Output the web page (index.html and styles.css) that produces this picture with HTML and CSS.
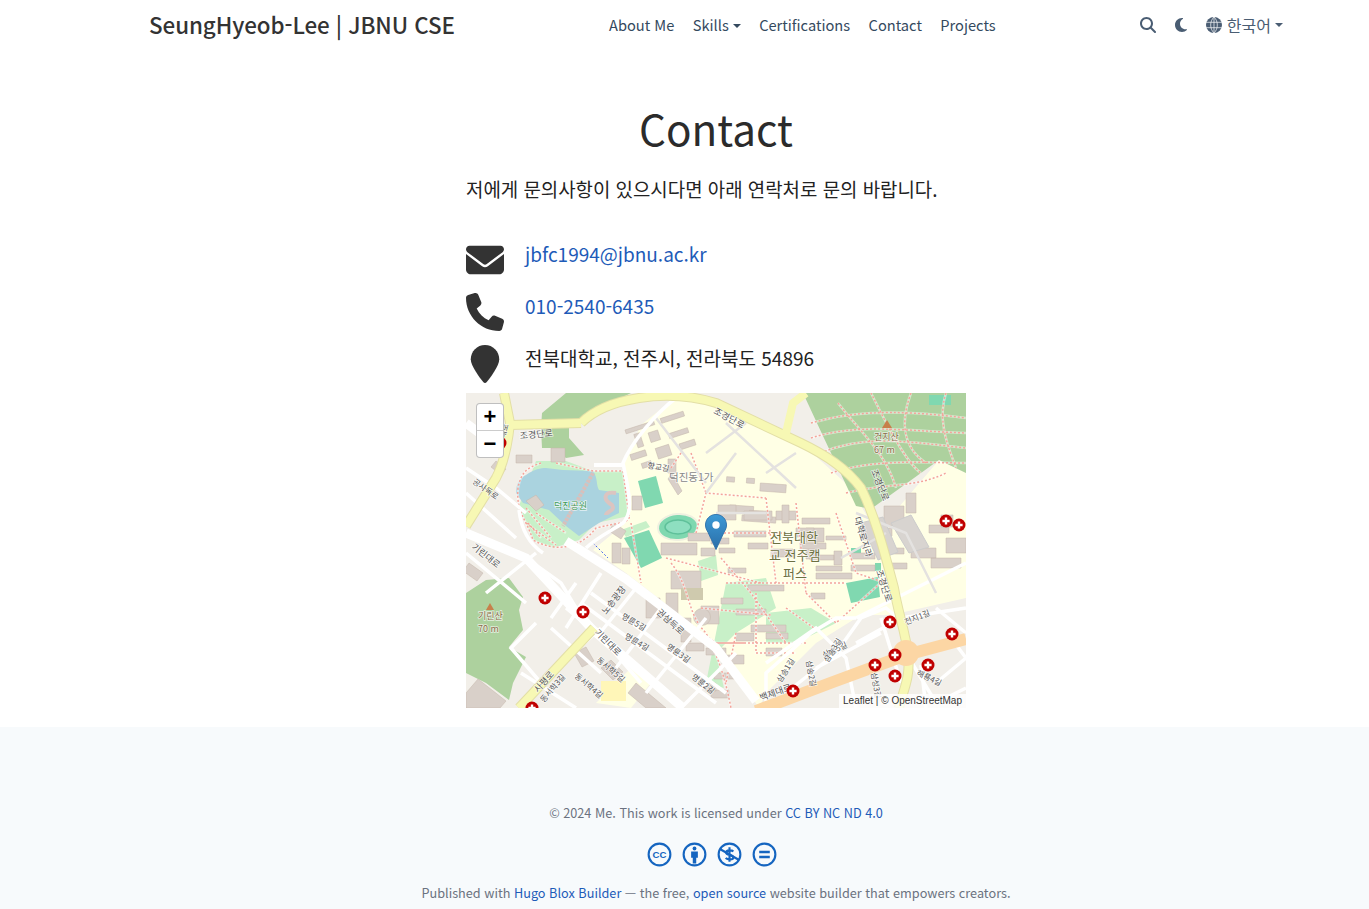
FILE: index.html
```html
<!DOCTYPE html>
<html lang="ko">
<head>
    <meta charset="UTF-8">
    <meta name="viewport" content="width=device-width, initial-scale=1.0">
    <title>Contact | SeungHyeob-Lee</title>
    <link rel="stylesheet" href="styles.css">
</head>
<body>
<div class="page">
    <header class="navbar">
        <a class="brand" href="#">SeungHyeob-Lee | JBNU CSE</a>
        <nav class="nav-links">
            <a href="#">About Me</a>
            <a href="#" class="caret">Skills</a>
            <a href="#">Certifications</a>
            <a href="#">Contact</a>
            <a href="#">Projects</a>
        </nav>
        <div class="nav-tools">
            <svg class="tool-icon" viewBox="0 0 512 512"><path d="M416 208c0 45.900-14.900 88.300-40 122.700L502.600 457.400c12.500 12.500 12.500 32.800 0 45.300s-32.800 12.500-45.300 0L330.700 376c-34.400 25.200-76.800 40-122.700 40C93.100 416 0 322.900 0 208S93.100 0 208 0S416 93.100 416 208zM208 352a144 144 0 1 0 0-288 144 144 0 1 0 0 288z"/></svg>
            <svg class="tool-icon moon" viewBox="0 0 384 512"><path d="M223.500 32C100 32 0 132.300 0 256S100 480 223.500 480c60.600 0 115.500-24.200 155.800-63.400c5-4.900 6.300-12.500 3.100-18.700s-10.100-9.700-17-8.500c-9.800 1.700-19.800 2.600-30.100 2.600c-96.900 0-175.500-78.800-175.500-176c0-65.800 36-123.100 89.300-153.300c6.100-3.500 9.200-10.500 7.700-17.300s-7.300-11.900-14.300-12.500c-6.300-.5-12.600-.8-19-.8z"/></svg>
            <a href="#" class="lang caret">
                <svg class="tool-icon globe" viewBox="0 0 16 16">
                    <circle cx="8" cy="8" r="8"/>
                    <path d="M0 5.300h16M0 10.700h16M8 0v16M8 0C3.600 4 3.600 12 8 16M8 0c4.400 4 4.400 12 0 16" fill="none" stroke="#fff" stroke-width="0.700"/>
                </svg>
                한국어
            </a>
        </div>
    </header>

    <main class="content">
        <h1>Contact</h1>
        <p class="lead">저에게 문의사항이 있으시다면 아래 연락처로 문의 바랍니다.</p>
        <ul class="contact-list">
            <li>
                <span class="contact-icon"><svg viewBox="0 0 512 512"><path d="M48 64C21.500 64 0 85.500 0 112c0 15.100 7.100 29.300 19.200 38.400L236.800 313.600c11.400 8.500 27 8.500 38.400 0L492.800 150.400c12.100-9.100 19.200-23.300 19.200-38.400c0-26.500-21.500-48-48-48H48zM0 176V384c0 35.300 28.700 64 64 64H448c35.300 0 64-28.700 64-64V176L294.400 339.200c-22.800 17.100-54 17.100-76.800 0L0 176z"/></svg></span>
                <a href="#">jbfc1994@jbnu.ac.kr</a>
            </li>
            <li>
                <span class="contact-icon"><svg viewBox="0 0 512 512"><path d="M164.900 24.600c-7.700-18.600-28-28.500-47.400-23.200l-88 24C12.100 30.200 0 46 0 64C0 311.400 200.600 512 448 512c18 0 33.800-12.100 38.600-29.500l24-88c5.300-19.400-4.600-39.700-23.200-47.400l-96-40c-16.300-6.800-35.200-2.100-46.300 11.600L304.700 368C234.300 334.700 177.300 277.700 144 207.300L193.300 167c13.700-11.200 18.400-30 11.600-46.300l-40-96z"/></svg></span>
                <a href="#">010-2540-6435</a>
            </li>
            <li>
                <span class="contact-icon"><svg viewBox="0 0 512 512"><path transform="translate(64 0)" d="M384 192c0 87.400-117 243-168.300 307.200c-12.300 15.300-35.100 15.300-47.400 0C117 435 0 279.400 0 192C0 86 86 0 192 0S384 86 384 192z"/></svg></span>
                <span>전북대학교, 전주시, 전라북도 54896</span>
            </li>
        </ul>

        <div class="map">
            <svg class="map-tiles" viewBox="0 0 500 315">
                <defs>
                    <g id="hospital">
                        <circle r="6.500" fill="#c00000"/>
                        <path d="M0-3.600v7.200M-3.600 0h7.200" stroke="#fff" stroke-width="2.400"/>
                    </g>
                    <filter id="soft"><feGaussianBlur stdDeviation="0.35"/></filter>
                    <path id="forestPaths" d="M345 30C380 20 420 15 500 25M345 45C390 30 440 38 500 40M355 60C400 40 450 50 500 55M365 80C410 65 460 70 500 70M380 100C420 90 450 95 480 80M372 10C395 40 420 60 430 95M405 0C420 30 440 70 455 80M445 0C430 40 445 60 460 70M480 0C470 30 485 60 490 75"/>
                    <path id="parkPaths" d="M75 70C60 75 55 80 52 95C50 120 60 125 67 147C90 160 115 155 130 135C150 130 165 130 163 123M90 70L127 78L157 78L163 123M60 130L90 152M70 120L100 140M60 115L85 145M62 130L75 145"/>
                    <path id="campusPaths" d="M205 170C225 195 220 220 240 240C255 270 260 290 265 315M175 195L250 250M260 190H380M255 165L285 200L320 250M230 140L240 100L300 105M330 110L340 200M370 120L390 180L420 190M290 200L290 260L330 260M250 250L340 250M240 250H280M340 200L370 230L420 185M200 165L295 190M165 130L175 190M225 60L240 100M250 140H320M300 105L310 190M215 60L205 75M235 215L305 222M270 240L260 290M320 215L355 240"/>
                </defs>
                <g filter="url(#soft)">
                    <rect width="500" height="315" fill="#f2efe9"/>

                    <!-- campus -->
                    <path class="campus" d="M157 70L175 32L205 8L255 8L335 50L385 95L402 125L415 135L473 67L500 80V205L425 222L395 222L350 250L300 300L293 315L250 250L160 180L127 157L157 132L163 113Z"/>
                    <path class="campus" d="M130 310L170 270L185 290L165 315Z"/>

                    <!-- forest and hills -->
                    <path class="wood" d="M337 0L357 43L390 113L405 116L473 67L500 80V0Z"/>
                    <path class="wood" d="M75 35L76 20L100 0H165L115 25L103 32V45L118 62L100 65L88 55L76 55Z"/>
                    <path class="wood" d="M0 200L20 187L43 185L57 204L53 217L57 237L43 254L60 264L47 290L43 307L20 290L0 280Z"/>

                    <!-- park and lake -->
                    <path class="park" d="M70 68L100 68L127 78L157 78L163 123L130 130L113 147L87 155L67 147L53 113Z"/>
                    <path class="lake" d="M50 100C50 90 55 84 60 82C68 76 75 75 80 75L97 77L127 78C132 85 130 92 133 97L153 100L153 120L133 130L113 143L100 133L83 117L57 110Z"/>
                    <path d="M127 80L97 133" stroke="#d8c0bc" stroke-width="4" stroke-dasharray="3 1"/>
                    <path d="M150 100C138 98 136 106 146 112C150 118 140 118 140 122" fill="none" stroke="#dcc4c0" stroke-width="4"/>

                    <!-- small parks on campus -->
                    <path class="pitch" d="M172 88L190 83L197 110L179 115Z"/>
                    <path class="pitch" d="M158 145L183 137L196 165L175 175Z"/>
                    <path class="park" d="M155 137L180 128L184 134L160 144Z"/>
                    <path class="pitch" d="M380 190L412 184L414 204L385 210Z"/>
                    <path class="pitch" d="M463 2H485V12H463Z"/>
                    <path class="pitch" d="M385 155h10v10h-10z"/>
                    <path class="pitch" d="M409 170h6v8h-6z"/>
                    <ellipse cx="212" cy="134" rx="20" ry="13" fill="#7fd8b0" stroke="#f0f0e0" stroke-width="2" transform="rotate(-5 212 134)"/>
                    <ellipse cx="212" cy="134" rx="13" ry="7" fill="#8edfc0" stroke="#5fc09a" stroke-width="1.500"/>
                    <path class="park" d="M232 168L250 162L252 182L235 188Z"/>
                    <path class="park" d="M260 190L300 185L310 215L270 240L250 260L258 295L240 290Z"/>
                    <path class="park" d="M300 220L345 215L370 230L330 250L300 250Z"/>

                    <!-- buildings, campus -->
                    <path class="building" transform="rotate(-18 200 50)" d="M165 25h30v4h-30zM172 32h6v14h-6zM186 35h10v10h-10zM202 25h24v5h-24zM205 42h20v5h-20zM162 50h16v6h-16zM188 52h14v11h-14zM212 55h16v6h-16zM170 62h10v5h-10z"/>
                    <path class="building" d="M320 90h8v5h-8zM340 90h8v5h-8zM354 94h26v8h-26zM325 118h24v6h-24zM345 122h14v5h-14zM338 127h34v6h-34z" transform="translate(-60 -5) rotate(4 340 100)"/>
                    <path class="building" d="M252 112h18v15h-18zM278 118h28v9h-28zM310 118h20v9h-20zM336 125h28v6h-28zM245 145h18v6h-18zM268 138h32v6h-32zM340 135h18v14h-18zM360 143h20v4h-20z"/>
                    <path class="building" d="M222 140h22v8h-22zM235 155h14v8h-14zM253 155h16v5h-16zM282 150h20v6h-20zM305 156h22v8h-22zM340 150h12v16h-12zM350 180h36v6h-36z"/>
                    <path class="building" d="M166 103h10v14h-10zM146 150h9v20h-9zM156 155h8v16h-8zM195 150h36v12h-36zM205 178h30v18h-30zM200 200h12v30h-12zM235 213h18v18h-18zM262 175h18v5h-18zM282 192h36v6h-36zM255 205h22v6h-22zM270 216h30v6h-30zM285 232h35v7h-35zM300 240h22v6h-22zM345 200h14v6h-14zM215 225h10v24h-10zM180 205h14v20h-14z"/>
                    <path class="building" d="M220 250h18v8h-18zM240 255h20v7h-20zM256 262h22v9h-22zM248 280h24v6h-24zM240 290h10v8h-10zM300 255h16v8h-16zM270 240h18v8h-18zM245 297h18v8h-18z"/>
                    <path class="building" d="M316 112h7v18h-7zM330 135h18v9h-18zM334 150h26v6h-26zM344 162h24v5h-24zM350 173h26v5h-26zM368 158h8v14h-8z"/>
                    <circle cx="236" cy="224" r="8.500" fill="#d9d0c9" stroke="#c4b6ab" stroke-width="0.500"/>
                    <path class="building" d="M202 66h8v14h-8zM206 80l10 18l-4 4l-10-16z"/>
                    <path d="M215 195h22v12h-22z" fill="#cfcaae"/>

                    <!-- buildings, east -->
                    <path class="building" d="M440 100h10v20h-10zM418 113h20v20h-20zM475 122h12v12h-12zM463 132h20v8h-20zM480 145h20v15h-20zM445 155h25v10h-25zM465 165h30v10h-30zM420 155h18v6h-18zM425 170h16v6h-16zM385 160h24v6h-24zM385 172h24v6h-24zM404 135h22v8h-22zM395 135h8v12h-8z"/>
                    <path d="M395 130l22-6l15 35l-20 8zM425 130l20-8l18 32l-20 6z" fill="#d8d4d0" stroke="#ccc" stroke-width="1"/>

                    <!-- buildings, town -->
                    <path class="building" d="M0 300l12-14l28 22l-6 7h-34zM108 260l12-6l8 14l-12 6zM170 290l30 25h-20l-18-15zM135 275l10-8l12 12l-10 8zM3 170l14 10l-6 8l-14-10zM30 45l10 5v8l-10-5zM148 130l12 8l-5 8l-12-8z"/>
                    <path class="building" d="M30 68l10 8l-5 6l-10-8zM50 62h16v8h-16zM60 108l10-6l8 10l-8 6zM85 55h14v14h-14z"/>
                    <path d="M135 288h25v20h-25z" fill="#fff6b8"/>

                    <!-- paths -->
                    <use href="#forestPaths" class="dots-back"/>
                    <use href="#forestPaths" class="dots"/>
                    <use href="#parkPaths" class="dots-back"/>
                    <use href="#parkPaths" class="dots"/>
                    <use href="#campusPaths" class="dots-back"/>
                    <use href="#campusPaths" class="dots"/>
                    <path d="M127 150l15 15" stroke="#4060f0" stroke-width="1" stroke-dasharray="2 2" fill="none"/>

                    <!-- streets -->
                    <path class="street" d="M0 75L30 95L60 120M0 100L50 145M0 160L60 210M60 165L95 190L110 215L175 290M20 200L70 160M110 190L85 225M135 180L100 235M170 195L130 245M195 215L150 275M240 225L180 300M270 260L215 315M115 210L250 310M125 200L260 300M70 230L45 255L75 290L135 235M85 235L135 280M55 280L110 315M100 215L160 265"/>
                    <path class="street" d="M300 315L300 280L345 240L370 225L390 225M300 270L350 235L380 265L390 315M320 300L370 260L395 225L420 215L440 232M350 275L415 240M390 225L500 170M415 225L435 290M470 215L500 240M390 250L435 225L500 215M400 280L435 260M470 290L500 265M440 260L470 310L500 295M455 272L460 315M485 245L500 265"/>
                    <path class="street thin" d="M190 25L240 90M240 60L280 30M260 30L330 95M300 80L330 60M250 120H300M390 120L440 140L470 200M240 100L270 60M420 140L375 165"/>
                    <path class="street" d="M210 5C190 20 165 50 157 70C163 100 168 118 157 130C145 138 130 145 120 155"/>
                    <path class="street" d="M53 117C55 135 62 150 77 160"/>
                    <path class="wide" d="M0 140L60 165L127 237L217 315"/>
                    <path class="wide" d="M100 148L160 186L250 255L290 308"/>
                    <path class="wide" d="M0 30L40 60"/>
                    <path class="wide thin-wide" d="M128 72H157"/>
                    <path class="casing" d="M115 30C140 5 200 -5 250 10L335 50C360 62 380 75 395 95C410 125 420 165 428 195C432 220 440 240 442 262C445 285 436 300 433 315"/>
                    <path class="casing" d="M38 0L44 30C42 50 38 70 30 85L0 133"/>
                    <path class="casing" d="M44 32L115 30"/>
                    <path class="casing" d="M128 235L53 315"/>
                    <path class="trunk" d="M115 30C140 5 200 -5 250 10L335 50C360 62 380 75 395 95C410 125 420 165 428 195C432 220 440 240 442 262C445 285 436 300 433 315"/>
                    <path class="trunk" d="M38 0L44 30C42 50 38 70 30 85L0 133"/>
                    <path class="trunk" d="M44 32L115 30"/>
                    <path class="trunk" d="M128 235L53 315"/>
                    <path class="trunk" d="M320 40L327 10L340 0"/>
                    <path class="primary" d="M290 318L367 289L440 262L500 246"/>
                    <circle cx="440" cy="260" r="13" fill="#fcd6a4"/>
                </g>

                <!-- labels -->
                <g class="labels">
                    <text x="54" y="46" transform="rotate(-5 54 46)">조경단로</text>
                    <text x="247" y="20" transform="rotate(28 247 20)">조경단로</text>
                    <text x="181" y="75" transform="rotate(10 181 75)" font-size="8">향교길</text>
                    <text x="405" y="78" transform="rotate(68 405 78)">조경단로</text>
                    <text x="388" y="125" transform="rotate(73 388 125)">대학로지라</text>
                    <text x="410" y="178" transform="rotate(72 410 178)">조경단로</text>
                    <text x="35" y="60" transform="rotate(-75 35 60)" font-size="8">백제대로</text>
                    <text x="6" y="90" transform="rotate(35 6 90)" font-size="8">공사독로</text>
                    <text x="5" y="155" transform="rotate(38 5 155)">기린대로</text>
                    <text x="128" y="240" transform="rotate(45 128 240)">기린대로</text>
                    <text x="190" y="220" transform="rotate(42 190 220)">권삼득로</text>
                    <text x="140" y="222" transform="rotate(-52 140 222)">노송광장</text>
                    <text x="155" y="225" transform="rotate(30 155 225)" font-size="8">명륜5길</text>
                    <text x="158" y="245" transform="rotate(30 158 245)" font-size="8">명륜4길</text>
                    <text x="200" y="255" transform="rotate(35 200 255)" font-size="8">명륜3길</text>
                    <text x="225" y="285" transform="rotate(38 225 285)" font-size="8">명륜2길</text>
                    <text x="72" y="300" transform="rotate(-48 72 300)">사평로</text>
                    <text x="130" y="268" transform="rotate(40 130 268)" font-size="8">동서학5길</text>
                    <text x="108" y="284" transform="rotate(40 108 284)" font-size="8">동서학4길</text>
                    <text x="78" y="310" transform="rotate(-50 78 310)" font-size="8">동서학3길</text>
                    <text x="440" y="232" transform="rotate(-22 440 232)" font-size="8">전지1길</text>
                    <text x="358" y="265" transform="rotate(-25 358 265)" font-size="8">삼송5길</text>
                    <text x="362" y="270" transform="rotate(-58 362 270)" font-size="8">삼송3길</text>
                    <text x="315" y="290" transform="rotate(-58 315 290)" font-size="8">삼송1길</text>
                    <text x="340" y="268" transform="rotate(80 340 268)" font-size="8">삼송2길</text>
                    <text x="405" y="280" transform="rotate(80 405 280)" font-size="8">삼성3길</text>
                    <text x="450" y="282" transform="rotate(25 450 282)" font-size="8">해룡4길</text>
                    <text x="295" y="308" transform="rotate(-20 295 308)">백제대로</text>
                    <text class="place" x="203" y="88">덕진동1가</text>
                    <text class="park-name" x="88" y="116">덕진공원</text>
                    <text class="peak" x="408" y="47">건지산</text>
                    <text class="peak" x="408" y="60">67 m</text>
                    <text class="peak" x="12" y="226">기린산</text>
                    <text class="peak" x="12" y="239">70 m</text>
                    <text class="campus-name" x="304" y="149">전북대학</text>
                    <text class="campus-name" x="303" y="167">교 전주캠</text>
                    <text class="campus-name" x="317" y="185">퍼스</text>
                </g>
                <path d="M416 35l5-8l5 8z" fill="#c77f4a"/>
                <path d="M20 217l4-7l4 7z" fill="#c77f4a"/>

                <use href="#hospital" x="34" y="50"/>
                <use href="#hospital" x="480" y="128"/>
                <use href="#hospital" x="493" y="132"/>
                <use href="#hospital" x="79" y="205"/>
                <use href="#hospital" x="117" y="219"/>
                <use href="#hospital" x="424" y="229"/>
                <use href="#hospital" x="486" y="241"/>
                <use href="#hospital" x="429" y="262"/>
                <use href="#hospital" x="409" y="272"/>
                <use href="#hospital" x="462" y="272"/>
                <use href="#hospital" x="429" y="283"/>
                <use href="#hospital" x="327" y="298"/>
                <use href="#hospital" x="66" y="315"/>
            </svg>

            <div class="zoom-control">
                <a href="#">+</a>
                <a href="#">−</a>
            </div>
            <svg class="map-pin" viewBox="0 0 25 41">
                <defs>
                    <linearGradient id="pinFill" x1="0" y1="0" x2="0" y2="1">
                        <stop offset="0" stop-color="#3d9ad6"/>
                        <stop offset="1" stop-color="#2a6ea8"/>
                    </linearGradient>
                </defs>
                <path d="M12.500 0.500C5.800 0.500 0.500 5.800 0.500 12.500C0.500 16 2 18.500 3.500 21L12.500 40.500L21.500 21C23 18.500 24.500 16 24.500 12.500C24.500 5.800 19.200 0.500 12.500 0.500Z" fill="url(#pinFill)" stroke="#2a6ea8"/>
                <circle cx="12.500" cy="12.500" r="4.200" fill="#fff"/>
            </svg>
            <div class="attribution"><a href="#">Leaflet</a> | © <a href="#">OpenStreetMap</a></div>
        </div>
    </main>

    <footer class="footer">
        <p>© 2024 Me. This work is licensed under <a href="#">CC BY NC ND 4.0</a></p>
        <div class="cc-icons">
            <svg viewBox="0 0 26 26"><circle cx="13" cy="13" r="11.300"/><text x="13" y="17" text-anchor="middle">CC</text></svg>
            <svg viewBox="0 0 26 26"><circle cx="13" cy="13" r="11.300"/><circle class="solid" cx="13" cy="6.800" r="2"/><path class="solid" d="M9.500 9.800h7v6.500h-1.700v6h-3.600v-6h-1.700z"/></svg>
            <svg viewBox="0 0 26 26"><circle cx="13" cy="13" r="11.300"/><path d="M3.500 7.500L22.500 18.500"/><path d="M17 9.800C15.500 8.200 9.500 8 9.500 11.200C9.500 14.500 17 12.500 17 16C17 18.800 11 18.600 9 16.600M13 5.500V20.500"/></svg>
            <svg viewBox="0 0 26 26"><circle cx="13" cy="13" r="11.300"/><path d="M7.500 10.500h11M7.500 15.500h11" stroke-width="2.600"/></svg>
        </div>
        <p>Published with <a href="#">Hugo Blox Builder</a> — the free, <a href="#">open source</a> website builder that empowers creators.</p>
    </footer>
</div>
</body>
</html>
```

FILE: styles.css
```css
:root {
    --text-color: #2b2b2b;
    --nav-color: #34495e;
    --link-color: #1e5bb8;
    --footer-bg: #f7fafc;
    --footer-text: #6b7280;
}
html, body {
    margin: 0;
    height: 909px;
    overflow: hidden;
    background: white;
}
body {
    font-family: "Noto Sans CJK KR", "Noto Sans", sans-serif;
    color: var(--text-color);
}
a {
    color: inherit;
    text-decoration: none;
}
.page {
    width: 1432px;
}
.navbar {
    display: flex;
    align-items: center;
    justify-content: space-between;
    box-sizing: border-box;
    height: 52px;
    padding: 0 149px 4px;
}
.brand {
    font-size: 22.400px;
    font-weight: 500;
    letter-spacing: -0.080px;
    color: #333;
}
.nav-links {
    display: flex;
    gap: 18.400px;
    font-size: 14.650px;
    color: var(--nav-color);
    margin-left: 10px;
}
.caret::after {
    content: "";
    display: inline-block;
    margin-left: 4px;
    vertical-align: 3px;
    border-top: 4px solid currentColor;
    border-left: 4px solid transparent;
    border-right: 4px solid transparent;
}
.nav-tools {
    display: flex;
    align-items: center;
    gap: 19px;
    margin-top: 2px;
    color: #4a5d73;
}
.tool-icon {
    display: block;
    width: 16px;
    height: 16px;
    fill: #4a5d73;
}
.moon {
    width: 12px;
}
.lang {
    display: flex;
    align-items: center;
    gap: 5px;
    font-size: 16px;
}
.lang.caret::after {
    margin-left: -1px;
    vertical-align: 0;
}
.content {
    width: 500px;
    margin: 0 auto;
    padding-bottom: 19px;
}
h1 {
    margin: 45px 0 0;
    text-align: center;
    font-size: 42.200px;
    font-weight: 400;
    line-height: 62px;
}
.lead {
    margin: 15px 0 0;
    font-size: 18.900px;
    line-height: 30px;
    color: #222;
}
.contact-list {
    list-style: none;
    margin: 33px 0 0;
    padding: 0;
}
.contact-list li {
    display: flex;
    height: 52px;
    font-size: 19px;
    line-height: 28px;
    color: #222;
}
.contact-list li > a,
.contact-list li > span:last-child {
    padding-top: 3px;
}
.contact-list a {
    color: var(--link-color);
}
.contact-icon {
    width: 38px;
    height: 38px;
    margin: 4px 21px 0 0;
    flex: none;
}
.contact-icon svg {
    display: block;
    width: 38px;
    height: 38px;
    fill: #333;
}
.map {
    position: relative;
    height: 315px;
    overflow: hidden;
    background: #f2efe9;
}
.map-tiles {
    display: block;
    width: 500px;
    height: 315px;
}
.campus { fill: #ffffe5; }
.wood { fill: #add19e; }
.park { fill: #c8f0c8; }
.lake { fill: #aad3df; }
.pitch { fill: #80d8b0; }
.building {
    fill: #d9d0c9;
    stroke: #c4b6ab;
    stroke-width: 0.500;
}
.dots-back {
    fill: none;
    stroke: #fff;
    stroke-width: 2.500;
    stroke-opacity: 0.500;
}
.dots {
    fill: none;
    stroke: #f4a49a;
    stroke-width: 1.500;
    stroke-dasharray: 2 2;
}
.street {
    fill: none;
    stroke: #fff;
    stroke-width: 3.500;
}
.street.thin {
    stroke: #e4e2e0;
    stroke-width: 2.500;
}
.wide {
    fill: none;
    stroke: #fff;
    stroke-width: 9;
}
.thin-wide {
    stroke-width: 4;
}
.casing {
    fill: none;
    stroke: #e3dfa6;
    stroke-width: 10;
}
.trunk {
    fill: none;
    stroke: #f7f8b4;
    stroke-width: 8;
}
.primary {
    fill: none;
    stroke: #fcd6a4;
    stroke-width: 12;
}
.labels text {
    font-size: 9px;
    fill: #555;
    stroke: #fff;
    stroke-width: 1.500;
    stroke-opacity: 0.700;
    paint-order: stroke;
}
.labels text[font-size="8"] {
    font-size: 8px;
}
.labels .place {
    font-size: 10.500px;
    fill: #888;
}
.labels .park-name {
    font-size: 9px;
    fill: #3f9a55;
}
.labels .peak {
    font-size: 9px;
    fill: #8a6d4a;
}
.labels .campus-name {
    font-size: 13px;
    fill: #6c7040;
}
.zoom-control {
    position: absolute;
    top: 10px;
    left: 10px;
    width: 26px;
    border: 1px solid rgba(0, 0, 0, 0.25);
    border-radius: 4px;
    background: white;
}
.zoom-control a {
    display: block;
    height: 26px;
    text-align: center;
    font: bold 22px/26px "Liberation Sans", sans-serif;
    color: black;
}
.zoom-control a:first-child {
    border-bottom: 1px solid #ccc;
}
.map-pin {
    position: absolute;
    left: 239px;
    top: 121px;
    width: 22px;
    height: 36px;
}
.attribution {
    position: absolute;
    right: 0;
    bottom: 0;
    padding: 0 4px;
    background: rgba(255, 255, 255, 0.8);
    font: 10px/14px "Liberation Sans", sans-serif;
    color: #333;
}
.footer {
    background: var(--footer-bg);
    padding-top: 76px;
    height: 140px;
    text-align: center;
    font-size: 12.700px;
    line-height: 20px;
    color: var(--footer-text);
}
.footer p {
    margin: 0;
}
.footer a {
    color: var(--link-color);
}
.cc-icons {
    display: flex;
    justify-content: center;
    gap: 10px;
    margin: 19px 8px 16px 0;
}
.cc-icons svg {
    display: block;
    width: 25px;
    height: 25px;
    fill: none;
    stroke: #1565c0;
    stroke-width: 2.200;
}
.cc-icons text {
    font: bold 10px "Liberation Sans", sans-serif;
    fill: #1565c0;
    stroke: none;
}
.cc-icons .solid {
    fill: #1565c0;
    stroke: none;
}
```
